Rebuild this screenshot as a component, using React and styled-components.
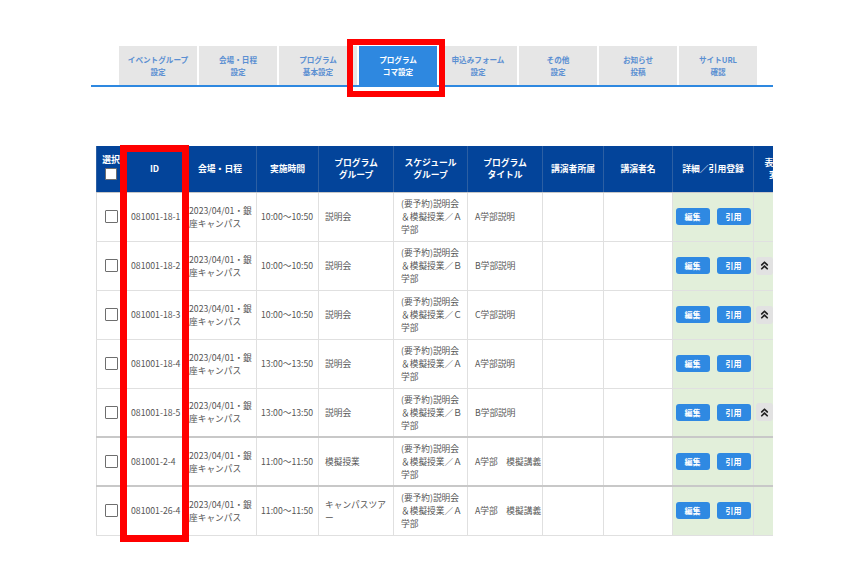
import React from "react";
import styled, { createGlobalStyle } from "styled-components";
import { ChevronsUp } from "lucide-react";

const GlobalStyle = createGlobalStyle`
  html, body { margin: 0; padding: 0; background: #ffffff; }
  body { font-family: "Noto Sans CJK JP", "Noto Sans", sans-serif; }
  * { box-sizing: border-box; }
`;

const Page = styled.div`
  position: relative;
  width: 857px;
  height: 577px;
  padding: 46px 0 0 91px;
`;

const Container = styled.div`
  width: 682px;
`;

const TabBar = styled.div`
  display: flex;
  gap: 2px;
  padding-left: 28px;
  border-bottom: 2px solid #2e88e0;
`;

const Tab = styled.div`
  width: 78px;
  height: 39px;
  display: flex;
  align-items: center;
  justify-content: center;
  text-align: center;
  font-size: 7.6px;
  font-weight: 700;
  line-height: 12px;
  background: ${(p) => (p.$active ? "#2e88e0" : "#e6e6e6")};
  color: ${(p) => (p.$active ? "#ffffff" : "#5a8fd2")};
`;

const TableWrap = styled.div`
  margin-top: 59px;
  padding-left: 5px;
  overflow: hidden;
`;

const Table = styled.table`
  border-collapse: collapse;
  table-layout: fixed;
  width: 705px;
  border-left: 1px solid #dddddd;
`;

const Col = styled.col`
  width: ${(p) => p.$w}px;
`;

const Th = styled.th`
  height: 46px;
  padding: 0 2px;
  background: #03449a;
  color: #ffffff;
  font-size: 8.8px;
  font-weight: 700;
  line-height: 11.5px;
  text-align: center;
  vertical-align: middle;
  border-left: 1px solid #2c5fa3;
  border-bottom: 1px solid #c8c8c8;
  white-space: nowrap;
`;

const SelectHead = styled.div`
  display: flex;
  flex-direction: column;
  align-items: center;
  gap: 2px;
  margin-top: -4px;
`;

const Tr = styled.tr`
  border-top: ${(p) => (p.$thick ? "2px solid #c8c8c8" : "1px solid #e0e0e0")};
`;

const Td = styled.td`
  height: 49px;
  padding: 0 ${(p) => p.$pr ?? 2}px 0 ${(p) => p.$pl ?? 5}px;
  font-size: 8.7px;
  line-height: 13px;
  color: #555555;
  vertical-align: middle;
  text-align: left;
  border-right: 1px solid #e0e0e0;
  border-bottom: 1px solid #e0e0e0;
  background: ${(p) => (p.$green ? "#e2efda" : "#ffffff")};
  word-break: break-all;
`;

const Check = styled.input.attrs({ type: "checkbox" })`
  appearance: none;
  -webkit-appearance: none;
  display: block;
  margin: 0 auto;
  width: ${(p) => (p.$small ? 12 : 13)}px;
  height: ${(p) => (p.$small ? 12 : 13)}px;
  border: 1.5px solid #6e6e6e;
  border-radius: 1px;
  background: #ffffff;
`;

const BtnRow = styled.div`
  display: flex;
  justify-content: center;
  gap: 7px;
`;

const Btn = styled.button`
  width: 34px;
  height: 17px;
  padding: 0;
  border: none;
  border-radius: 3px;
  background: #2f89e2;
  color: #ffffff;
  font-family: inherit;
  font-size: 8px;
  font-weight: 700;
  line-height: 17px;
`;

const OrderBtn = styled.button`
  display: flex;
  align-items: center;
  justify-content: center;
  width: 17px;
  height: 18px;
  padding: 0;
  margin-left: -3px;
  border: none;
  border-radius: 3px;
  background: #e2e2e2;
  color: #222222;
`;

const RedBox = styled.div`
  position: absolute;
  left: ${(p) => p.$x}px;
  top: ${(p) => p.$y}px;
  width: ${(p) => p.$w}px;
  height: ${(p) => p.$h}px;
  border: ${(p) => p.$b}px solid #ff0000;
  pointer-events: none;
`;

const tabs = [
  ["イベントグループ", "設定"],
  ["会場・日程", "設定"],
  ["プログラム", "基本設定"],
  ["プログラム", "コマ設定"],
  ["申込みフォーム", "設定"],
  ["その他", "設定"],
  ["お知らせ", "投稿"],
  ["サイトURL", "確認"],
];

const columns = [
  { w: 29 },
  { w: 58, label: ["ID"], pl: 5 },
  { w: 73, label: ["会場・日程"], pl: 5, pr: 2 },
  { w: 62, label: ["実施時間"], pl: 4 },
  { w: 75, label: ["プログラム", "グループ"], pl: 6 },
  { w: 74, label: ["スケジュール", "グループ"], pl: 7 },
  { w: 75, label: ["プログラム", "タイトル"], pl: 7, pr: 0 },
  { w: 61, label: ["講演者所属"] },
  { w: 69, label: ["講演者名"] },
  { w: 81, label: ["詳細／引用登録"] },
  { w: 48, label: ["表示順", "変更"] },
];

const venue = "2023/04/01・銀座キャンパス";
const fullWidth = { A: "Ａ", B: "Ｂ", C: "Ｃ" };
const sched = (g) => `(要予約)説明会＆模擬授業／${fullWidth[g]}学部`;

const rows = [
  { id: "081001-18-1", time: "10:00〜10:50", pg: "説明会", g: "A", pt: "A学部説明", up: false },
  { id: "081001-18-2", time: "10:00〜10:50", pg: "説明会", g: "B", pt: "B学部説明", up: true },
  { id: "081001-18-3", time: "10:00〜10:50", pg: "説明会", g: "C", pt: "C学部説明", up: true },
  { id: "081001-18-4", time: "13:00〜13:50", pg: "説明会", g: "A", pt: "A学部説明", up: false },
  { id: "081001-18-5", time: "13:00〜13:50", pg: "説明会", g: "B", pt: "B学部説明", up: true },
  { id: "081001-2-4", time: "11:00〜11:50", pg: "模擬授業", g: "A", pt: "A学部　模擬講義", up: false, thick: true },
  { id: "081001-26-4", time: "11:00〜11:50", pg: "キャンパスツアー", g: "A", pt: "A学部　模擬講義", up: false, thick: true },
];

const Lines = ({ parts }) =>
  parts.map((t, i) => (
    <React.Fragment key={i}>
      {i > 0 && <br />}
      {t}
    </React.Fragment>
  ));

export default function App() {
  return (
    <>
      <GlobalStyle />
      <Page>
        <Container>
          <TabBar>
            {tabs.map((t, i) => (
              <Tab key={i} $active={i === 3}>
                <span>
                  <Lines parts={t} />
                </span>
              </Tab>
            ))}
          </TabBar>
          <TableWrap>
            <Table>
              <colgroup>
                {columns.map((c, i) => (
                  <Col key={i} $w={c.w} />
                ))}
              </colgroup>
              <thead>
                <tr>
                  <Th>
                    <SelectHead>
                      <span>選択</span>
                      <Check $small readOnly />
                    </SelectHead>
                  </Th>
                  {columns.slice(1).map((c, i) => (
                    <Th key={i}>
                      <Lines parts={c.label} />
                    </Th>
                  ))}
                </tr>
              </thead>
              <tbody>
                {rows.map((r, i) => {
                  const cells = [r.id, venue, r.time, r.pg, sched(r.g), r.pt, "", ""];
                  return (
                    <Tr key={i} $thick={r.thick}>
                      <Td $pl={0} $pr={0}>
                        <Check readOnly />
                      </Td>
                      {cells.map((v, j) => (
                        <Td key={j} $pl={columns[j + 1].pl} $pr={columns[j + 1].pr}>
                          {v}
                        </Td>
                      ))}
                      <Td $green $pl={0} $pr={0}>
                        <BtnRow>
                          <Btn>編集</Btn>
                          <Btn>引用</Btn>
                        </BtnRow>
                      </Td>
                      <Td $green $pl={5} $pr={0}>
                        {r.up && (
                          <OrderBtn>
                            <ChevronsUp size={13} strokeWidth={3.2} />
                          </OrderBtn>
                        )}
                      </Td>
                    </Tr>
                  );
                })}
              </tbody>
            </Table>
          </TableWrap>
        </Container>
        <RedBox $x={347} $y={39} $w={98} $h={58} $b={6} />
        <RedBox $x={120} $y={145} $w={69} $h={397} $b={7} />
      </Page>
    </>
  );
}
